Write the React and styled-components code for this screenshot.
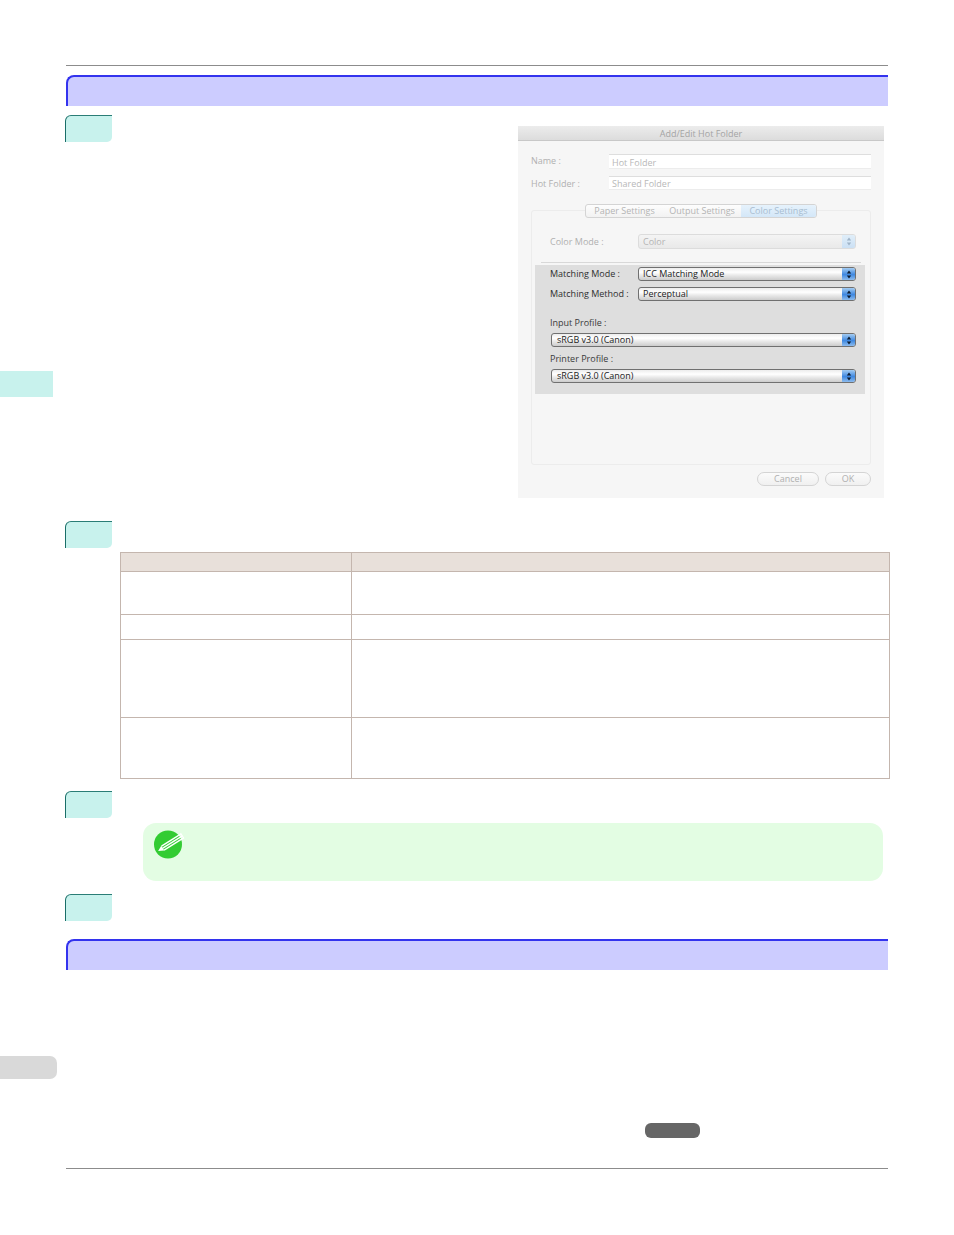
import React from "react";
import styled, { createGlobalStyle } from "styled-components";

const Global = createGlobalStyle`
  html, body { margin: 0; padding: 0; background: #fff; }
  body { font-family: "Open Sans", "Liberation Sans", sans-serif; }
`;

const Page = styled.div`
  display: flex;
  width: 954px;
  height: 1235px;
  overflow: hidden;
`;

const Rail = styled.div`
  width: 66px;
  flex: none;
  display: flex;
  flex-direction: column;
  padding-top: 371px;
  box-sizing: border-box;
`;

const RailTab = styled.div`
  height: 26px;
  width: 53px;
  background: #c8f2ed;
`;

const RailPage = styled.div`
  margin-top: 659px;
  height: 23px;
  width: 57px;
  background: #d9d9d9;
  border-radius: 0 7px 7px 0;
`;

const Main = styled.div`
  width: 822px;
  flex: none;
  padding-top: 65px;
`;

const Rule = styled.div`
  height: 1px;
  background: #8c8c8c;
  margin-top: ${(p) => p.$top || 0}px;
`;

const SectionBar = styled.div`
  box-sizing: border-box;
  height: 31px;
  margin-top: ${(p) => p.$top}px;
  background: #ccccff;
  border-top: 2px solid #3333ee;
  border-left: 2px solid #3333ee;
  border-top-left-radius: 8px;
`;

const StepTab = styled.div`
  box-sizing: border-box;
  width: 47px;
  height: 27px;
  flex: none;
  margin-left: -1px;
  margin-top: ${(p) => p.$top || 0}px;
  background: #c8f2ed;
  border-top: 1px solid #2a7d76;
  border-left: 1px solid #1a6e68;
  border-radius: 6px 0 5px 0;
`;

const StepRow = styled.div`
  display: flex;
  justify-content: space-between;
  align-items: flex-start;
  margin-top: 9px;
  padding-right: 4px;
`;

const Dialog = styled.div`
  box-sizing: border-box;
  width: 366px;
  height: 372px;
  margin-top: 11px;
  background: #f6f6f6;
  font-size: 9px;
  color: #b4b4b4;
`;

const TitleBar = styled.div`
  height: 15px;
  box-sizing: border-box;
  background: linear-gradient(#ececec, #dcdcdc);
  border-bottom: 1px solid #c8c8c8;
  text-align: center;
  line-height: 15px;
  color: #a4a4a4;
`;

const DialogBody = styled.div`
  padding: 13px 13px 0;
`;

const FieldRow = styled.div`
  display: flex;
  align-items: flex-start;
  height: 15px;
  margin-bottom: ${(p) => p.$bottom || 0}px;
`;

const FieldLabel = styled.div`
  width: ${(p) => p.$w || 78}px;
  flex: none;
  color: #b0b0b0;
  line-height: ${(p) => p.$line || 13}px;
`;

const TextField = styled.div`
  flex: 1;
  height: ${(p) => p.$h || 15}px;
  box-sizing: border-box;
  background: #fff;
  border: 0 solid #ececec;
  border-top: 1px solid #dedede;
  border-bottom-width: 1px;
  padding-left: 3px;
  line-height: ${(p) => p.$line || 15}px;
  color: #b8b8b8;
`;

const GroupBox = styled.div`
  box-sizing: border-box;
  height: 255px;
  margin-top: 19px;
  border: 1px solid #ececec;
  border-radius: 3px;
`;

const TabStrip = styled.div`
  display: flex;
  width: 232px;
  height: 14px;
  margin: -7px 0 0 53px;
  box-sizing: border-box;
  border: 1px solid #d4d4d4;
  border-radius: 3px;
  background: linear-gradient(#fdfdfd, #f2f2f2);
  overflow: hidden;
`;

const TabItem = styled.div`
  text-align: center;
  width: ${(p) => p.$w}px;
  line-height: 12px;
  color: ${(p) => (p.$active ? "#a9bdd0" : "#b4b4b4")};
  background: ${(p) => (p.$active ? "linear-gradient(#e6f2fc, #d4e7f8)" : "transparent")};
`;

const ColorModeRow = styled.div`
  display: flex;
  align-items: center;
  margin: 16px 14px 0 18px;
`;

const Separator = styled.div`
  height: 1px;
  background: #d8d8d8;
  margin: 13px 9px 0;
`;

const Highlight = styled.div`
  box-sizing: border-box;
  height: 129px;
  margin: 2px 5px 0 3px;
  padding: 2px 9px 0 15px;
  background: #dedede;
  color: #333;
`;

const MatchRow = styled.div`
  display: flex;
  align-items: center;
  margin-bottom: ${(p) => p.$bottom || 0}px;
`;

const MatchLabel = styled.div`
  width: 88px;
  flex: none;
  color: #2e2e2e;
  padding-bottom: 1px;
`;

const ProfileLabel = styled.div`
  height: 12px;
  line-height: 12px;
  color: #3a3a3a;
  margin-top: ${(p) => p.$top}px;
  margin-bottom: ${(p) => p.$bottom}px;
`;

const SelectIndent = styled.div`
  flex: 1;
  display: flex;
  margin-left: 1px;
`;

const SelectBox = styled.div`
  flex: 1;
  height: ${(p) => (p.$off ? 15 : 14)}px;
  box-sizing: border-box;
  display: flex;
  border: 1px solid ${(p) => (p.$off ? "#dcdcdc" : "#707070")};
  border-radius: 3px;
  overflow: hidden;
  background: ${(p) =>
    p.$off
      ? "linear-gradient(#f4f4f4, #e9e9e9)"
      : "linear-gradient(#ececec 0%, #fff 35%, #eaeaea 60%, #cccccc 100%)"};
`;

const SelectText = styled.div`
  flex: 1;
  padding-left: ${(p) => p.$pad}px;
  line-height: ${(p) => (p.$off ? 13 : 12)}px;
  color: ${(p) => (p.$off ? "#b4b4b4" : "#1c1c1c")};
`;

const SelectArrow = styled.div`
  width: 13px;
  flex: none;
  display: flex;
  align-items: center;
  justify-content: center;
  background: ${(p) =>
    p.$off ? "linear-gradient(#e0eef9, #cbe0f4)" : "linear-gradient(#a4ccf2, #3f88e0 55%, #8dbcee)"};
`;

const DialogFooter = styled.div`
  display: flex;
  justify-content: flex-end;
  gap: 6px;
  margin-top: 7px;
`;

const PillButton = styled.div`
  box-sizing: border-box;
  width: ${(p) => p.$w}px;
  height: 14px;
  border: 1px solid #d4d4d4;
  border-radius: 7px;
  background: linear-gradient(#fbfbfb, #f0f0f0);
  text-align: center;
  line-height: 12px;
  color: #b0b0b0;
`;

const Table = styled.div`
  box-sizing: border-box;
  width: 770px;
  margin: 4px 0 0 54px;
  border: 1px solid #c4b6ae;
  border-width: 1px 1px 0 1px;
`;

const TableRow = styled.div`
  display: grid;
  grid-template-columns: 231px 1fr;
  height: ${(p) => p.$h}px;
  box-sizing: border-box;
  border-bottom: 1px solid #c4b6ae;
  background: ${(p) => (p.$head ? "#e8e0da" : "#fff")};
`;

const TableCell = styled.div`
  border-right: 1px solid #c4b6ae;
  &:last-child { border-right: 0; }
`;

const Note = styled.div`
  box-sizing: border-box;
  height: 58px;
  margin: 5px 5px 0 77px;
  padding: 7px 0 0 10px;
  background: #e3fde3;
  border-radius: 13px;
`;

const ButtonPill = styled.div`
  width: 55px;
  height: 15px;
  margin: 153px 0 0 579px;
  background: #666;
  border-radius: 6px;
`;

const Arrows = ({ color }) => (
  <svg width="6" height="9" viewBox="0 0 6 9">
    <path d="M3 0.5 L5.2 3.4 L0.8 3.4 Z M3 8.5 L5.2 5.6 L0.8 5.6 Z" fill={color} />
  </svg>
);

const Select = ({ text, off, pad = 4 }) => (
  <SelectBox $off={off}>
    <SelectText $off={off} $pad={pad}>{text}</SelectText>
    <SelectArrow $off={off}>
      <Arrows color={off ? "#9fb4c8" : "#0c1c30"} />
    </SelectArrow>
  </SelectBox>
);

const NoteIcon = () => (
  <svg width="32" height="30" viewBox="0 0 32 30" style={{ display: "block" }}>
    <circle cx="15" cy="14.5" r="14" fill="#33cc33" />
    <g transform="rotate(-32 6 20.5)">
      <path d="M5 20.5 L10.5 17.6 L10.5 23.4 Z" fill="#fff" />
      <rect x="10.5" y="17.4" width="23" height="1.4" fill="#fff" />
      <rect x="10.5" y="19.8" width="23" height="1.4" fill="#fff" />
      <rect x="10.5" y="22.2" width="23" height="1.4" fill="#fff" />
      <rect x="33" y="17.4" width="1" height="6.2" fill="#fff" />
    </g>
  </svg>
);

export default function App() {
  return (
    <Page>
      <Global />
      <Rail>
        <RailTab />
        <RailPage />
      </Rail>
      <Main>
        <Rule />
        <SectionBar $top={9} />
        <StepRow>
          <StepTab />
          <Dialog>
            <TitleBar>Add/Edit Hot Folder</TitleBar>
            <DialogBody>
              <FieldRow $bottom={7}>
                <FieldLabel>Name :</FieldLabel>
                <TextField>Hot Folder</TextField>
              </FieldRow>
              <FieldRow>
                <FieldLabel $line={16}>Hot Folder :</FieldLabel>
                <TextField $h={14} $line={13}>Shared Folder</TextField>
              </FieldRow>
              <GroupBox>
                <TabStrip>
                  <TabItem $w={77}>Paper Settings</TabItem>
                  <TabItem $w={78}>Output Settings</TabItem>
                  <TabItem $w={75} $active>Color Settings</TabItem>
                </TabStrip>
                <ColorModeRow>
                  <FieldLabel $w={88}>Color Mode :</FieldLabel>
                  <Select text="Color" off />
                </ColorModeRow>
                <Separator />
                <Highlight>
                  <MatchRow $bottom={6}>
                    <MatchLabel>Matching Mode :</MatchLabel>
                    <Select text="ICC Matching Mode" />
                  </MatchRow>
                  <MatchRow>
                    <MatchLabel>Matching Method :</MatchLabel>
                    <Select text="Perceptual" />
                  </MatchRow>
                  <ProfileLabel $top={16} $bottom={4}>Input Profile :</ProfileLabel>
                  <MatchRow>
                    <SelectIndent><Select text="sRGB v3.0 (Canon)" pad={5} /></SelectIndent>
                  </MatchRow>
                  <ProfileLabel $top={6} $bottom={4}>Printer Profile :</ProfileLabel>
                  <MatchRow>
                    <SelectIndent><Select text="sRGB v3.0 (Canon)" pad={5} /></SelectIndent>
                  </MatchRow>
                </Highlight>
              </GroupBox>
              <DialogFooter>
                <PillButton $w={62}>Cancel</PillButton>
                <PillButton $w={46}>OK</PillButton>
              </DialogFooter>
            </DialogBody>
          </Dialog>
        </StepRow>
        <StepTab $top={23} />
        <Table>
          <TableRow $head $h={19}><TableCell /><TableCell /></TableRow>
          <TableRow $h={43}><TableCell /><TableCell /></TableRow>
          <TableRow $h={25}><TableCell /><TableCell /></TableRow>
          <TableRow $h={78}><TableCell /><TableCell /></TableRow>
          <TableRow $h={61}><TableCell /><TableCell /></TableRow>
        </Table>
        <StepTab $top={12} />
        <Note><NoteIcon /></Note>
        <StepTab $top={13} />
        <SectionBar $top={18} />
        <ButtonPill />
        <Rule $top={30} />
      </Main>
    </Page>
  );
}
